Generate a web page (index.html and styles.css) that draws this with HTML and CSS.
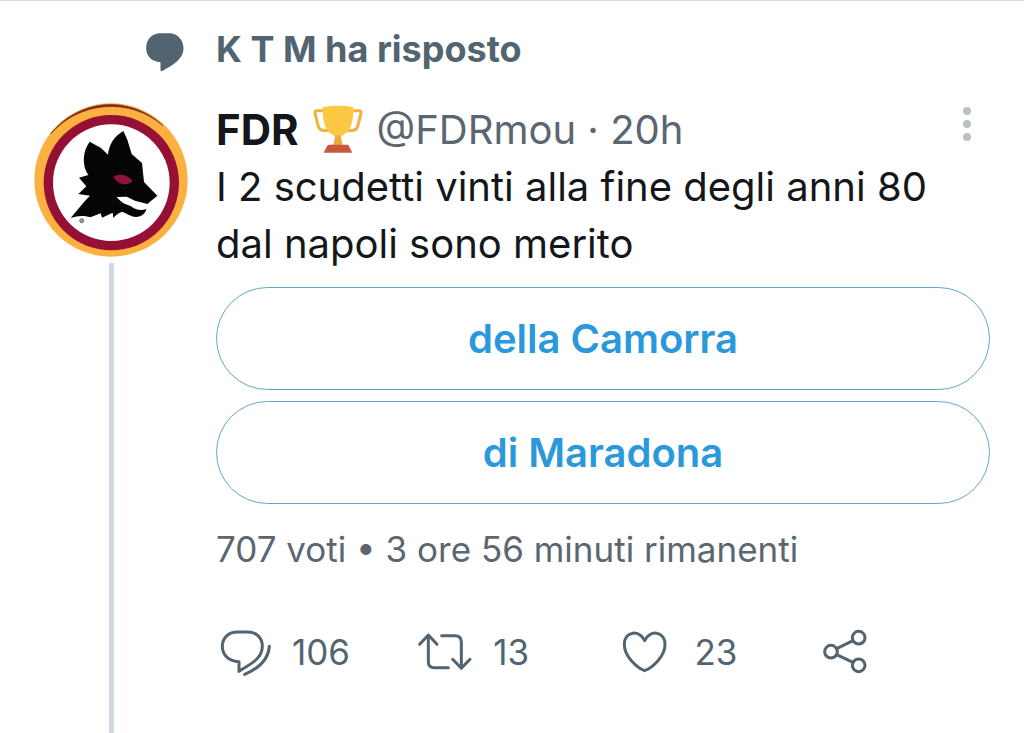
FILE: index.html
```html
<!DOCTYPE html>
<html lang="it">
<head>
    <meta charset="UTF-8">
    <meta name="viewport" content="width=device-width, initial-scale=1.0">
    <title>Tweet</title>
    <link rel="stylesheet" href="styles.css">
</head>
<body>
    <article class="tweet">
        <svg class="context-icon" viewBox="46 96 116 120" aria-hidden="true">
            <path d="M88 100H122C145 102 161 122 161 145C161 178 128 197 97 213Q92 215 92 209V187C64 184 49 168 49 144C49 120 65 102 88 100Z"/>
        </svg>
        <div class="context">K T M ha risposto</div>

        <div class="side">
            <svg class="avatar" viewBox="12 25 462 462" role="img" aria-label="FDR">
                <circle cx="243" cy="256" r="230" fill="#fbb040"/>
                <path d="M62 118A227 227 0 0 1 398 92A240 240 0 0 0 62 118Z" fill="#7d2a22" stroke="#7d2a22" stroke-width="2"/>
                <circle cx="244" cy="264" r="203" fill="#960f35"/>
                <circle cx="244" cy="264" r="175" fill="#fff"/>
                <path d="M179 141L213 160L234 180C237 150 252 125 280 109L292 135L305 178L336 205L342 262L382 303L370 313L352 328L315 318L290 306L260 307C272 322 284 329 302 334C316 346 334 349 349 343C347 356 335 366 318 367C303 366 294 358 277 351C266 353 257 362 250 370L248 354L216 369L212 356L181 368C161 362 144 362 122 370L164 320L180 303L145 298L169 275L147 249L175 241C155 213 158 168 179 141Z" fill="#050505"/>
                <path d="M250 246C268 236 292 239 308 259C292 275 264 272 250 246Z" fill="#8f1238"/>
                <circle cx="155" cy="378" r="6" fill="#999" stroke="#777" stroke-width="3"/>
            </svg>
            <div class="thread-line"></div>
        </div>

        <div class="content">
            <header class="author">
                <a class="name" href="#">FDR</a>
                <svg class="trophy" viewBox="308 28 150 146" role="img" aria-label="Trofeo">
                    <path d="M342 45H318Q313 45 314 52L324 92Q328 104 342 104H356M424 45H448Q453 45 452 52L442 92Q438 104 424 104H410" fill="none" stroke="#f5b03e" stroke-width="9"/>
                    <path d="M337 34Q383 26 429 34C430 75 422 105 400 116Q391 121 391 130L396 149H370L375 130Q375 121 366 116C344 105 336 75 337 34Z" fill="#fdc944"/>
                    <path d="M376 118H390L398 150H368Z" fill="#f2a83b"/>
                    <path d="M356 147H410Q415 147 417 153L426 171H340L349 153Q351 147 356 147Z" fill="#c9583b"/>
                </svg>
                <a class="meta" href="#">@FDRmou · 20h</a>
                <button class="more" aria-label="Altro">
                    <svg viewBox="0 0 12 36"><circle cx="6" cy="5" r="4"/><circle cx="6" cy="18" r="4"/><circle cx="6" cy="31" r="4"/></svg>
                </button>
            </header>

            <p class="text">I 2 scudetti vinti alla fine degli anni 80 dal napoli sono merito</p>

            <div class="poll">
                <button class="option">della Camorra</button>
                <button class="option">di Maradona</button>
            </div>
            <p class="votes">707 voti • 3 ore 56 minuti rimanenti</p>

            <footer class="actions">
                <button class="action" aria-label="Rispondi, 106">
                    <svg viewBox="18 24 168 144">
                        <path d="M87 154V125C56 124 37 105 37 79C37 52 57 36 82 36H113C139 36 157 53 157 79C157 119 116 134 87 154Z"/>
                        <path d="M178 79C175 122 140 148 104 163"/>
                    </svg>
                    <span>106</span>
                </button>
                <button class="action" aria-label="Ritwitta, 13">
                    <svg viewBox="621 24 168 144">
                        <path d="M629 73L655 45L681 73M655 47V126Q655 143 673 143H715"/>
                        <path d="M695 47H735Q754 47 754 65V144M728 118L754 145L780 118"/>
                    </svg>
                    <span>13</span>
                </button>
                <button class="action" aria-label="Mi piace, 23">
                    <svg viewBox="54 24 168 144">
                        <path d="M134 62C121 30 73 30 73 74C73 108 109 142 134 152C159 142 195 108 195 74C195 30 147 30 134 62Z"/>
                    </svg>
                    <span>23</span>
                </button>
                <button class="action" aria-label="Condividi">
                    <svg viewBox="660 24 168 144">
                        <circle cx="693" cy="95" r="19"/>
                        <circle cx="776" cy="53" r="19"/>
                        <circle cx="776" cy="136" r="19"/>
                        <path d="M710 86L759 62M710 104L759 127"/>
                    </svg>
                </button>
            </footer>
        </div>
    </article>
</body>
</html>
```

FILE: styles.css
```css
* {
    box-sizing: border-box;
}

body {
    margin: 0;
    background: #fff;
    color: #14171a;
    font-family: Inter, sans-serif;
    font-size: 40px;
    line-height: 57px;
}

a {
    color: inherit;
    text-decoration: none;
}

p {
    margin: 0;
}

button {
    padding: 0;
    border: none;
    background: none;
    color: inherit;
    font: inherit;
    cursor: pointer;
}

.tweet {
    display: grid;
    grid-template-columns: 154px 1fr;
    grid-template-rows: auto 1fr;
    column-gap: 28px;
    min-height: 100vh;
    padding: 20px 34px 0;
    border-top: 1px solid #d9d9d9;
}

.context-icon {
    justify-self: end;
    align-self: end;
    width: 39px;
    height: 40px;
    margin: 0 4px 6px 0;
    fill: #536471;
}

.context {
    color: #536471;
    font-size: 36px;
    font-weight: 700;
}

.side {
    display: flex;
    flex-direction: column;
    align-items: center;
    gap: 6px;
    padding-top: 25px;
}

.avatar {
    width: 154px;
    height: 154px;
}

.thread-line {
    flex: 1;
    width: 5px;
    background: #cfd9de;
}

.content {
    padding-top: 23px;
}

.author {
    display: flex;
    align-items: center;
    gap: 14px;
}

.name {
    font-size: 42px;
    font-weight: 700;
}

.trophy {
    width: 50px;
    height: 49px;
}

.meta {
    color: #5b6670;
}

.more {
    display: flex;
    margin-left: auto;
    padding: 0 17px 12px;
}

.more svg {
    width: 12px;
    height: 36px;
    fill: #b9c0c4;
}

.poll {
    display: flex;
    flex-direction: column;
    gap: 11px;
    margin-top: 15px;
}

.option {
    height: 103px;
    border: 1px solid #5fa9c4;
    border-radius: 52px;
    color: #2b98dc;
    font-weight: 600;
}

.votes {
    margin-top: 17px;
    color: #5b6670;
    font-size: 35px;
}

.actions {
    display: flex;
    margin-top: 50px;
    color: #536471;
    font-size: 35px;
    line-height: 48px;
}

.action {
    display: flex;
    flex: 0 0 26%;
    align-items: center;
    gap: 20px;
}

.action:last-child {
    flex-basis: auto;
}

.action svg {
    width: 56px;
    height: 48px;
    fill: none;
    stroke: currentColor;
    stroke-width: 9;
    stroke-linecap: round;
    stroke-linejoin: round;
}
```
